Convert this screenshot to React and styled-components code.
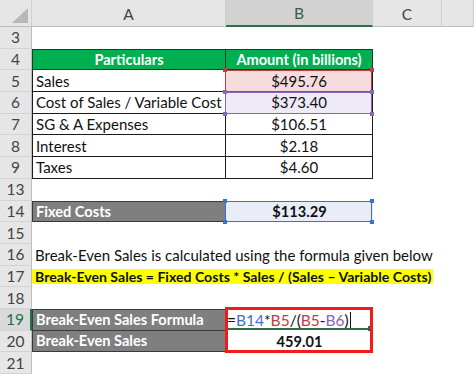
import React from 'react';
import styled, { createGlobalStyle, css } from 'styled-components';

const Global = createGlobalStyle`
  html, body { margin: 0; padding: 0; background: #fff; overflow: hidden; }
  #root { width: 474px; height: 374px; overflow: hidden; }
`;

const Sheet = styled.div`
  display: grid;
  grid-template-columns: 32px 194px 147px 69px 1fr;
  grid-template-rows: 27px repeat(16, 21.7px);
  width: 474px;
  height: 374px;
  font-family: Lato, "Noto Sans", sans-serif;
  font-size: 15px;
  color: #111;
  background: #fff;
`;

const place = css`
  grid-row: ${(p) => p.$r} / span ${(p) => p.$rs || 1};
  grid-column: ${(p) => p.$c} / span ${(p) => p.$span || 1};
`;

const Corner = styled.div`
  grid-row: 1;
  grid-column: 1;
  position: relative;
  background: #e6e6e6;
  border-right: 1px solid #cfcfcf;
  border-bottom: 1px solid #bdbdbd;
  box-sizing: border-box;
  svg { position: absolute; right: 3px; bottom: 3px; }
`;

const ColHead = styled.div`
  ${place};
  display: flex;
  align-items: center;
  justify-content: center;
  box-sizing: border-box;
  background: ${(p) => (p.$active ? '#d3d3d3' : '#e6e6e6')};
  border-right: 1px solid #cdcdcd;
  border-bottom: ${(p) => (p.$active ? '2px solid #2f6e48' : '1px solid #bdbdbd')};
  color: ${(p) => (p.$active ? '#3b5a47' : '#444')};
  font-size: 15.5px;
  padding-top: 1px;
`;

const RowHead = styled.div`
  ${place};
  display: flex;
  align-items: center;
  justify-content: center;
  box-sizing: border-box;
  background: ${(p) => (p.$active ? '#dadada' : '#e6e6e6')};
  border-bottom: 1px solid #d3d3d3;
  border-right: ${(p) => (p.$active ? '2px solid #217346' : '1px solid #bdbdbd')};
  color: ${(p) => (p.$active ? '#217346' : '#444')};
  font-size: 15.5px;
`;

const Cell = styled.div`
  ${place};
  display: flex;
  align-items: center;
  justify-content: ${(p) => (p.$center ? 'center' : 'flex-start')};
  padding: 0 ${(p) => (p.$center ? '0' : '3px')};
  box-sizing: border-box;
  white-space: nowrap;
  overflow: visible;
  background: ${(p) => p.$bg || 'transparent'};
  font-weight: ${(p) => (p.$bold ? 700 : 400)};
  font-size: ${(p) => (p.$bold ? '14.6px' : '15px')};
  color: ${(p) => p.$color || '#111'};
  ${(p) =>
    p.$boxed &&
    css`
      border-right: 1px solid ${p.$line || '#1c1c1c'};
      border-bottom: 1px solid ${p.$line || '#1c1c1c'};
      ${p.$top && `border-top: 1px solid ${p.$line || '#1c1c1c'};`}
      ${p.$left && `border-left: 1px solid ${p.$line || '#1c1c1c'};`}
    `}
`;

const Highlight = styled.span`
  background: #ffff00;
  font-weight: 700;
  font-size: 14.1px;
  margin-left: -3px;
  padding: 0 2px 0 3px;
  line-height: 15px;
  height: 15px;
  display: inline-block;
`;

const RefBox = styled.div`
  ${place};
  position: relative;
  z-index: 2;
  pointer-events: none;
  box-sizing: border-box;
  border: 1.5px solid ${(p) => p.$color};
  margin-left: -1px;
  margin-right: 1px;
`;

const Handle = styled.span`
  position: absolute;
  width: 4px;
  height: 4px;
  background: ${(p) => p.$color};
  ${(p) => (p.$y === 'top' ? 'top: -3px;' : 'bottom: -3px;')}
  ${(p) => (p.$x === 'left' ? 'left: -3px;' : 'right: -3px;')}
`;

const Annotation = styled.div`
  ${place};
  position: relative;
  z-index: 3;
  pointer-events: none;
  box-sizing: border-box;
  border: 3px solid #f21b1b;
  margin: -2px 0 -1px -1px;
`;

const Formula = styled.div`
  ${place};
  position: relative;
  display: flex;
  align-items: center;
  padding-left: 1px;
  font-size: 15.5px;
  white-space: nowrap;
`;

const Ref = styled.span`
  color: ${(p) => p.$color};
`;

const Caret = styled.span`
  display: inline-block;
  width: 1px;
  height: 16px;
  background: #111;
  margin-left: 1px;
`;

const EditLine = styled.span`
  position: absolute;
  left: 1px;
  right: 5px;
  bottom: 1px;
  height: 1.5px;
  background: #2f6e48;
  &::after {
    content: '';
    position: absolute;
    right: -4px;
    top: -2px;
    width: 4px;
    height: 5px;
    background: #3f5f4a;
  }
`;

const rows = [3, 4, 5, 6, 7, 8, 9, 13, 14, 15, 16, 17, 18, 19, 20, 21];
const R = (n) => rows.indexOf(n) + 2;

const tableRows = [
  ['Sales', '$495.76', '#f6dcdc'],
  ['Cost of Sales / Variable Cost', '$373.40', '#eeeaf6'],
  ['SG & A Expenses', '$106.51'],
  ['Interest', '$2.18'],
  ['Taxes', '$4.60'],
];

const RED = '#c43b44';
const PURPLE = '#8a64b8';
const BLUE = '#3f6fcc';

function Handles({ color }) {
  return (
    <>
      <Handle $color={color} $y="top" $x="left" />
      <Handle $color={color} $y="top" $x="right" />
      <Handle $color={color} $y="bottom" $x="left" />
      <Handle $color={color} $y="bottom" $x="right" />
    </>
  );
}

export default function App() {
  return (
    <>
      <Global />
      <Sheet>
        <Corner>
          <svg width="16" height="15" viewBox="0 0 16 15">
            <polygon points="16,0 16,15 0,15" fill="#b8b8b8" />
          </svg>
        </Corner>
        <ColHead $r={1} $c={2}>A</ColHead>
        <ColHead $r={1} $c={3} $active>B</ColHead>
        <ColHead $r={1} $c={4}>C</ColHead>
        <ColHead $r={1} $c={5}></ColHead>

        {rows.map((n) => (
          <RowHead key={n} $r={R(n)} $c={1} $active={n === 19}>
            {n}
          </RowHead>
        ))}

        <Cell $r={R(4)} $c={2} $center $bold $color="#fff" $bg="#00b050" $boxed $top $left $line="#1d3d28">
          Particulars
        </Cell>
        <Cell $r={R(4)} $c={3} $center $bold $color="#fff" $bg="#00b050" $boxed $top $line="#1d3d28">
          Amount (in billions)
        </Cell>

        {tableRows.map(([label, val, bg], i) => (
          <React.Fragment key={label}>
            <Cell $r={R(5 + i)} $c={2} $boxed $left>
              {label}
            </Cell>
            <Cell $r={R(5 + i)} $c={3} $center $boxed $bg={bg}>
              {val}
            </Cell>
          </React.Fragment>
        ))}

        <RefBox $r={R(5)} $c={3} $color={RED}>
          <Handles color={RED} />
        </RefBox>
        <RefBox $r={R(6)} $c={3} $color={PURPLE}>
          <Handles color={PURPLE} />
        </RefBox>

        <Cell $r={R(14)} $c={2} $bold $color="#fff" $bg="#7f7f7f" $boxed $top $left $line="#3a3a3a">
          Fixed Costs
        </Cell>
        <Cell $r={R(14)} $c={3} $center $bold $bg="#e8edf8">
          $113.29
        </Cell>
        <RefBox $r={R(14)} $c={3} $color={BLUE}>
          <Handles color={BLUE} />
        </RefBox>

        <Cell $r={R(16)} $c={2} $span={4}>
          Break-Even Sales is calculated using the formula given below
        </Cell>
        <Cell $r={R(17)} $c={2} $span={4}>
          <Highlight>Break-Even Sales = Fixed Costs * Sales / (Sales – Variable Costs)</Highlight>
        </Cell>

        <Cell $r={R(19)} $c={2} $bold $color="#fff" $bg="#7f7f7f" $boxed $top $left $line="#3a3a3a">
          Break-Even Sales Formula
        </Cell>
        <Formula $r={R(19)} $c={3}>
          <span>=</span>
          <Ref $color={BLUE}>B14</Ref>
          <span>*</span>
          <Ref $color={RED}>B5</Ref>
          <span>/(</span>
          <Ref $color={RED}>B5</Ref>
          <span>-</span>
          <Ref $color={PURPLE}>B6</Ref>
          <span>)</span>
          <Caret />
          <EditLine />
        </Formula>
        <Cell $r={R(20)} $c={2} $bold $color="#fff" $bg="#7f7f7f" $boxed $left $line="#3a3a3a">
          Break-Even Sales
        </Cell>
        <Cell $r={R(20)} $c={3} $center $bold>
          459.01
        </Cell>
        <Annotation $r={R(19)} $rs={2} $c={3} />
      </Sheet>
    </>
  );
}
